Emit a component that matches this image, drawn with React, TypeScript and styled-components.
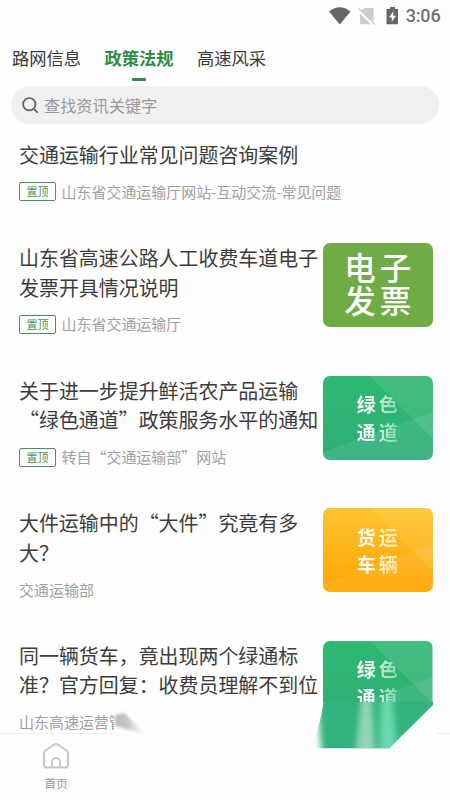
import React from 'react';
import styled, { createGlobalStyle, css } from 'styled-components';

const GlobalStyle = createGlobalStyle`
  * { box-sizing: border-box; }
  body { margin: 0; background: #fefefe; font-family: "Noto Sans CJK SC", sans-serif; }
`;

const Screen = styled.div`
  width: 450px;
  height: 800px;
  overflow: hidden;
  display: flex;
  flex-direction: column;
  background: #fefefe;
`;

const StatusBar = styled.header`
  height: 38px;
  flex: none;
  display: flex;
  align-items: center;
  justify-content: flex-end;
  padding: 0 9.5px 6px 0;
`;

const StatusIcons = styled.svg`
  width: 74px;
  height: 22px;
  margin-right: 3px;
`;

const Clock = styled.time`
  font: 500 18px/22px Roboto, sans-serif;
  color: #707070;
  letter-spacing: -0.15px;
`;

const Tabs = styled.nav`
  display: flex;
  flex: none;
  gap: 23.3px;
  height: 48px;
  padding: 7px 12px 0;
`;

const Tab = styled.div<{ $active?: boolean }>`
  display: flex;
  flex-direction: column;
  align-items: center;
  font-size: 17.3px;
  line-height: 26px;
  color: #3a3a3a;
  ${p => p.$active && css`
    color: #2e8b48;
    font-weight: 700;
    &::after {
      content: '';
      width: 13.5px;
      height: 3px;
      margin-top: 7px;
      border-radius: 1px;
      background: #2e8b48;
    }
  `}
`;

const SearchBox = styled.div`
  flex: none;
  display: flex;
  align-items: center;
  gap: 5px;
  height: 38px;
  margin: 0 11px;
  padding-left: 11px;
  border-radius: 19px;
  background: #f0f0f0;
  color: #999;
  font-size: 16.2px;
  line-height: 24px;
`;

const SearchIcon = styled.svg`
  width: 17px;
  height: 17px;
`;

const List = styled.main`
  flex: none;
  height: 609px;
  padding: 16px 17.5px 0 19px;
  overflow: hidden;
`;

const Article = styled.article`
  display: flex;
  justify-content: space-between;
  margin-bottom: 41.2px;
`;

const Copy = styled.div`
  width: 303px;
  flex: none;
`;

const Title = styled.h2`
  margin: 0 0 12.4px;
  font-size: 19.95px;
  line-height: 29.5px;
  font-weight: 400;
  color: #3c3c3c;
  white-space: nowrap;
`;

const TitleLine = styled.span`
  display: block;
`;

const Meta = styled.div`
  display: flex;
  align-items: center;
  gap: 5.5px;
  height: 20px;
  font-size: 15px;
  line-height: 20px;
  color: #a0a0a0;
  white-space: nowrap;
`;

const Source = styled.span`
  letter-spacing: -0.03px;
`;

const Pin = styled.span`
  width: 37px;
  height: 19px;
  flex: none;
  border: 1.3px solid #45945a;
  border-radius: 2px;
  color: #45945a;
  font-size: 11px;
  line-height: 17px;
  text-align: center;
`;

type Kind = 'invoice' | 'green' | 'orange';

const backgrounds: Record<Kind, string> = {
  invoice: '#6fac45',
  green: `linear-gradient(160deg, transparent 61%, rgba(255,255,255,.08) 61.8%),
    linear-gradient(45deg, transparent 67.3%, rgba(255,255,255,.09) 68%),
    linear-gradient(#2fb873, #2fae78)`,
  orange: `linear-gradient(160deg, transparent 61%, rgba(255,255,255,.07) 61.8%),
    linear-gradient(45deg, transparent 67.3%, rgba(255,255,255,.08) 68%),
    linear-gradient(#fdc331, #fea600)`,
};

const Thumb = styled.div<{ $kind: Kind; $cut?: boolean }>`
  width: 109.5px;
  height: 84px;
  flex: none;
  display: flex;
  flex-direction: column;
  align-items: center;
  justify-content: center;
  border-radius: 7px;
  background: ${p => backgrounds[p.$kind]};
  ${p => p.$kind === 'invoice' && css`padding-bottom: 4px;`}
  ${p => p.$cut && css`clip-path: inset(0 0 22px 0);`}
`;

const ThumbLine = styled.span<{ $kind: Kind }>`
  ${p => p.$kind === 'invoice' ? css`
    color: #fff;
    font-size: 31.5px;
    font-weight: 500;
    line-height: 33px;
    letter-spacing: 4px;
    margin-right: -4px;
  ` : css`
    color: transparent;
    background: linear-gradient(90deg, #fff 20%, ${p.$kind === 'green' ? '#75d5a5' : '#ffe19a'} 100%);
    background-clip: text;
    font-size: 19px;
    font-weight: 700;
    line-height: 27.5px;
    letter-spacing: 2.8px;
    margin-right: -1.8px;
  `}
`;

const Footer = styled.footer`
  position: relative;
  flex: none;
  height: 67px;
`;

const Divider = styled.div`
  display: flex;
  justify-content: space-between;
  &::before, &::after {
    content: '';
    height: 1px;
    background: #eee;
  }
  &::before { width: 114px; }
  &::after { width: 13px; }
`;

const HomeTab = styled.div`
  width: 112px;
  padding-top: 8px;
  display: flex;
  flex-direction: column;
  align-items: center;
  color: #999;
  font-size: 11.8px;
  line-height: 18px;
`;

const HomeIcon = styled.svg`
  width: 28px;
  height: 28px;
  margin-bottom: 4px;
`;

const Smear = styled.svg`
  position: absolute;
  left: 0;
  top: -33px;
  width: 450px;
  height: 60px;
`;

interface Entry {
  title: string[];
  source: string;
  pinned?: boolean;
  thumb?: { kind: Kind; lines: string[]; cut?: boolean };
}

const entries: Entry[] = [
  { title: ['交通运输行业常见问题咨询案例'], source: '山东省交通运输厅网站-互动交流-常见问题', pinned: true },
  {
    title: ['山东省高速公路人工收费车道电子', '发票开具情况说明'],
    source: '山东省交通运输厅', pinned: true,
    thumb: { kind: 'invoice', lines: ['电子', '发票'] },
  },
  {
    title: ['关于进一步提升鲜活农产品运输', '“绿色通道”政策服务水平的通知'],
    source: '转自“交通运输部”网站', pinned: true,
    thumb: { kind: 'green', lines: ['绿色', '通道'] },
  },
  {
    title: ['大件运输中的“大件”究竟有多', '大？'],
    source: '交通运输部',
    thumb: { kind: 'orange', lines: ['货运', '车辆'] },
  },
  {
    title: ['同一辆货车，竟出现两个绿通标', '准？官方回复：收费员理解不到位'],
    source: '山东高速运营管',
    thumb: { kind: 'green', lines: ['绿色', '通道'], cut: true },
  },
];

export default function App() {
  return (
    <Screen lang="zh-CN">
      <GlobalStyle />
      <StatusBar>
        <StatusIcons viewBox="0 0 74 22">
          <path d="M0 6.5Q10.8-2 21.5 6.5L10.8 19.5Z" fill="#666" />
          <path d="M35.5 3H44.5V17L31 5.8ZM31 8.5L42 19.2H31Z" fill="#ccc" />
          <path d="M30 3.5L46 19.5" stroke="#ccc" strokeWidth="1.5" />
          <path d="M57.5 4H61V2H66V4H69V19.3H57.5Z" fill="#666" />
          <path d="M64.3 6.2L60 12.4H62.8V16.7L67 10.7H64.3Z" fill="#fff" />
        </StatusIcons>
        <Clock>3:06</Clock>
      </StatusBar>
      <Tabs>
        <Tab>路网信息</Tab>
        <Tab $active>政策法规</Tab>
        <Tab>高速风采</Tab>
      </Tabs>
      <SearchBox>
        <SearchIcon viewBox="0 0 17 17" fill="none" stroke="#606060" strokeWidth="1.7" strokeLinecap="round">
          <circle cx="7.3" cy="7.2" r="6.2" />
          <path d="M11.8 11.8L15.2 15.2" />
        </SearchIcon>
        查找资讯关键字
      </SearchBox>
      <List>
        {entries.map(({ title, source, pinned, thumb }) => (
          <Article key={title[0]}>
            <Copy>
              <Title>{title.map(line => <TitleLine key={line}>{line}</TitleLine>)}</Title>
              <Meta>
                {pinned && <Pin>置顶</Pin>}
                <Source>{source}</Source>
              </Meta>
            </Copy>
            {thumb && (
              <Thumb $kind={thumb.kind} $cut={thumb.cut}>
                {thumb.lines.map(line => <ThumbLine key={line} $kind={thumb.kind}>{line}</ThumbLine>)}
              </Thumb>
            )}
          </Article>
        ))}
      </List>
      <Footer>
        <Divider />
        <HomeTab>
          <HomeIcon viewBox="0 0 28 28" fill="none" stroke="#c4c4c4" strokeWidth="1.8" strokeLinejoin="round">
            <path d="M2 11.2Q2 9.5 3.4 8.5L12.7 2.2Q14 1.4 15.3 2.2L24.6 8.5Q26 9.5 26 11.2V23Q26 25.5 23.5 25.5H4.5Q2 25.5 2 23Z" />
            <path d="M10 25V20a4 4 0 0 1 8 0V25" />
          </HomeIcon>
          首页
        </HomeTab>
        <Smear viewBox="0 0 450 60">
          <defs>
            <clipPath id="cone"><path d="M323.5 2H433V5L389 48.5H309Q320 30 323.5 2Z" /></clipPath>
            <filter id="fan" x="-50%" y="-20%" width="200%" height="140%"><feGaussianBlur stdDeviation="3.2 0" /></filter>
            <linearGradient id="shade" x1="0" y1="0" x2="1" y2="0">
              <stop offset="0" stopColor="#bbb" />
              <stop offset=".4" stopColor="#c4c4c4" />
              <stop offset="1" stopColor="#eee" stopOpacity="0.3" />
            </linearGradient>
            <filter id="soft"><feGaussianBlur stdDeviation="1.5" /></filter>
          </defs>
          <g clipPath="url(#cone)">
            <path d="M318 2H450V48.5H321Z" fill="#32b27c" filter="url(#fan)" />
            <path d="M361 2H372L375 48.5H356Z" fill="#91d6b7" filter="url(#fan)" />
            <path d="M381 2H393L397 48.5H379Z" fill="#6bd8ae" filter="url(#fan)" />
          </g>
          <path d="M114 11H126L152 39L114 29Z" fill="#fefefe" />
          <path d="M115 15L124 13L146 34L115 26Z" fill="url(#shade)" filter="url(#soft)" />
        </Smear>
      </Footer>
    </Screen>
  );
}
